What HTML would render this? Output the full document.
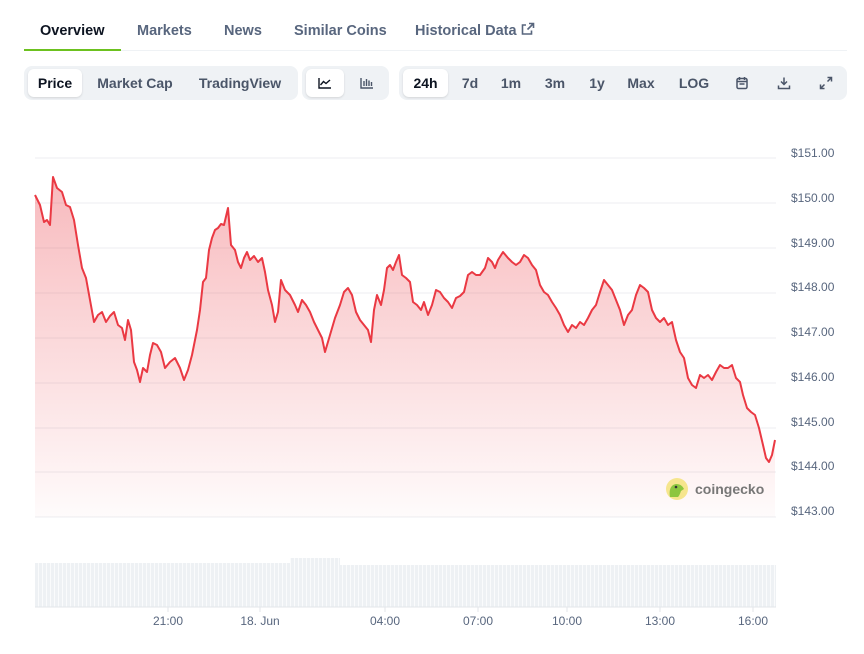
<!DOCTYPE html>
<html><head><meta charset="utf-8"><style>
body{margin:0;background:#fff;width:864px;height:654px;overflow:hidden;font-family:"Liberation Sans",sans-serif;position:relative}
.tabs{position:absolute;left:24px;top:0;width:823px;height:50px;border-bottom:1px solid #eff2f5}
.tab{position:absolute;top:23px;font-size:14.5px;font-weight:bold;color:#58667e}
.ul{position:absolute;left:24px;top:49px;width:97px;height:2px;background:#6cc11f}
.grp{position:absolute;top:66px;height:34px;background:#eff2f5;border-radius:8px}
.b{position:absolute;top:3px;height:28px;line-height:28px;font-size:14px;font-weight:bold;color:#4a5568;text-align:center}
.sel{background:#fff;border-radius:6px;color:#0d1421;box-shadow:0 1px 2px rgba(0,0,0,.12)}
.yl{position:absolute;left:791px;font-size:12px;color:#58667e}
.xl{position:absolute;top:614px;font-size:12px;color:#58667e;transform:translateX(-50%)}
</style></head><body>
<div class="tabs"></div>
<div class="tab" style="left:40px;color:#0d1421">Overview</div>
<div class="tab" style="left:137px">Markets</div>
<div class="tab" style="left:224px">News</div>
<div class="tab" style="left:294px">Similar Coins</div>
<div class="tab" style="left:415px;top:22px">Historical Data <svg width="14" height="14" viewBox="0 0 14 14" style="vertical-align:-1px"><path d="M8 1.5h4.5V6M12.5 1.5L6.5 7.5M10.5 8.5v3.5h-9v-9H5" fill="none" stroke="#58667e" stroke-width="1.6"/></svg></div>
<div class="ul"></div>

<div class="grp" style="left:24px;width:274px">
<div class="b sel" style="left:4px;width:54px">Price</div>
<div class="b" style="left:66px;width:90px">Market Cap</div>
<div class="b" style="left:166px;width:100px">TradingView</div>
</div>
<div class="grp" style="left:302px;width:87px">
<div class="b sel" style="left:4px;width:38px"><svg width="14" height="12" viewBox="0 0 14 12" style="vertical-align:-1px"><path d="M1 1v10h12M2.5 8l3-3.5 2.5 2 4-3.5" fill="none" stroke="#0d1421" stroke-width="1.4"/></svg></div>
<div class="b" style="left:46px;width:38px"><svg width="14" height="12" viewBox="0 0 14 12" style="vertical-align:-1px"><path d="M1 1v10h12M4 9V4M6.5 9V2M9 9V3.5M11.5 9V5" fill="none" stroke="#4a5568" stroke-width="1.4"/></svg></div>
</div>
<div class="grp" style="left:399px;width:448px">
<div class="b sel" style="left:4px;width:45px">24h</div>
<div class="b" style="left:56px;width:30px">7d</div>
<div class="b" style="left:96px;width:32px">1m</div>
<div class="b" style="left:140px;width:32px">3m</div>
<div class="b" style="left:184px;width:28px">1y</div>
<div class="b" style="left:222px;width:40px">Max</div>
<div class="b" style="left:272px;width:46px">LOG</div>
<div class="b" style="left:328px;width:30px"><svg width="14" height="14" viewBox="0 0 14 14" style="vertical-align:-2px"><rect x="2" y="2.5" width="10" height="10" rx="1.5" fill="none" stroke="#4a5568" stroke-width="1.5"/><path d="M2 5.5h10M4.5 1v3M9.5 1v3M4.5 8h5" stroke="#4a5568" stroke-width="1.5"/></svg></div>
<div class="b" style="left:370px;width:30px"><svg width="14" height="14" viewBox="0 0 14 14" style="vertical-align:-2px"><path d="M7 1.5v7M4 5.5l3 3 3-3M1.5 9.5v3h11v-3" fill="none" stroke="#4a5568" stroke-width="1.5"/></svg></div>
<div class="b" style="left:412px;width:30px"><svg width="14" height="14" viewBox="0 0 14 14" style="vertical-align:-2px"><path d="M8.5 1.5h4v4M12.5 1.5L8.5 5.5M5.5 12.5h-4v-4M1.5 12.5l4-4" fill="none" stroke="#4a5568" stroke-width="1.5"/></svg></div>
</div>

<svg width="864" height="654" style="position:absolute;left:0;top:0">
<defs><linearGradient id="g" x1="0" y1="0" x2="0" y2="1"><stop offset="0" stop-color="#ea3943" stop-opacity=".35"/><stop offset="1" stop-color="#ea3943" stop-opacity=".02"/></linearGradient>
<pattern id="vb" x="35" y="0" width="4" height="10" patternUnits="userSpaceOnUse"><rect x="0" y="0" width="3" height="10" fill="#eef1f4"/><rect x="3" y="0" width="1" height="10" fill="#fafbfc"/></pattern></defs>
<g stroke="#eceef1" stroke-width="1">
<path d="M35 158H776M35 203H776M35 248H776M35 293H776M35 338H776M35 383H776M35 428H776M35 472H776M35 517H776"/>
</g>
<path fill="url(#g)" d="M35,517 L35,195 40,205 44,222 47,220 50,225 53,177 57,188 62,192 66,205 70,207 74,220 78,245 82,268 86,278 90,300 94,322 98,315 102,312 106,322 110,316 114,312 118,325 122,328 125,340 128,320 131,330 134,362 137,370 140,382 143,368 147,372 150,355 153,343 157,345 161,352 165,368 170,362 175,358 180,368 184,380 188,370 192,355 197,330 200,310 203,282 206,278 209,250 212,238 215,230 218,228 221,224 224,225 228,208 231,245 235,250 238,262 241,268 244,258 247,252 250,260 254,256 258,262 262,258 265,272 268,290 272,305 275,322 278,312 281,280 285,290 290,295 295,305 298,312 302,300 306,305 310,312 314,322 318,330 322,338 325,352 330,335 335,318 340,305 344,292 348,288 352,295 356,312 360,320 364,325 368,330 371,342 374,310 377,295 381,305 384,290 387,268 390,265 393,270 396,262 399,255 402,275 406,278 410,282 413,302 417,305 421,310 424,302 428,315 432,305 436,290 440,292 444,298 448,302 452,308 456,298 460,296 464,292 468,275 472,272 476,275 480,275 485,268 488,258 492,262 495,268 498,260 503,252 508,258 512,262 516,265 520,262 524,255 528,258 532,265 536,270 540,285 544,292 548,295 552,302 556,308 560,315 564,325 568,332 572,325 576,328 580,322 584,325 588,318 592,310 596,305 600,292 604,280 608,285 612,290 616,300 620,310 624,325 628,315 632,310 636,295 640,285 644,288 648,292 652,310 656,318 660,322 664,318 668,325 672,322 676,340 680,352 684,358 688,378 692,385 696,388 700,375 704,378 708,375 712,380 716,372 720,365 724,368 728,368 732,365 736,378 740,382 743,395 747,408 751,412 755,415 759,428 763,445 766,458 769,462 772,455 775,440 L775,517 Z"/>
<polyline fill="none" stroke="#ea3943" stroke-width="2" stroke-linejoin="round" points="35,195 40,205 44,222 47,220 50,225 53,177 57,188 62,192 66,205 70,207 74,220 78,245 82,268 86,278 90,300 94,322 98,315 102,312 106,322 110,316 114,312 118,325 122,328 125,340 128,320 131,330 134,362 137,370 140,382 143,368 147,372 150,355 153,343 157,345 161,352 165,368 170,362 175,358 180,368 184,380 188,370 192,355 197,330 200,310 203,282 206,278 209,250 212,238 215,230 218,228 221,224 224,225 228,208 231,245 235,250 238,262 241,268 244,258 247,252 250,260 254,256 258,262 262,258 265,272 268,290 272,305 275,322 278,312 281,280 285,290 290,295 295,305 298,312 302,300 306,305 310,312 314,322 318,330 322,338 325,352 330,335 335,318 340,305 344,292 348,288 352,295 356,312 360,320 364,325 368,330 371,342 374,310 377,295 381,305 384,290 387,268 390,265 393,270 396,262 399,255 402,275 406,278 410,282 413,302 417,305 421,310 424,302 428,315 432,305 436,290 440,292 444,298 448,302 452,308 456,298 460,296 464,292 468,275 472,272 476,275 480,275 485,268 488,258 492,262 495,268 498,260 503,252 508,258 512,262 516,265 520,262 524,255 528,258 532,265 536,270 540,285 544,292 548,295 552,302 556,308 560,315 564,325 568,332 572,325 576,328 580,322 584,325 588,318 592,310 596,305 600,292 604,280 608,285 612,290 616,300 620,310 624,325 628,315 632,310 636,295 640,285 644,288 648,292 652,310 656,318 660,322 664,318 668,325 672,322 676,340 680,352 684,358 688,378 692,385 696,388 700,375 704,378 708,375 712,380 716,372 720,365 724,368 728,368 732,365 736,378 740,382 743,395 747,408 751,412 755,415 759,428 763,445 766,458 769,462 772,455 775,440"/>
<path d="M35 563H290V558H340V565H776V607H35Z" fill="url(#vb)"/>
<path d="M35 607H776" stroke="#e3e6ea"/>
<g stroke="#e3e6ea"><path d="M168 607v5M260 607v5M385 607v5M478 607v5M567 607v5M660 607v5M753 607v5"/></g>
<circle cx="677" cy="489" r="11" fill="#f6e58d"/>
<path d="M670 497c-1-6 0-12 6-13 5 0 7 3 8 5l-3 2c-1 3-2 5-3 6z" fill="#8dc63f"/>
<circle cx="676" cy="487" r="1.3" fill="#333"/>
<text x="695" y="494" font-family="Liberation Sans" font-weight="bold" font-size="14" fill="#777">coingecko</text>
</svg>
<div class="yl" style="top:146px">$151.00</div>
<div class="yl" style="top:191px">$150.00</div>
<div class="yl" style="top:236px">$149.00</div>
<div class="yl" style="top:280px">$148.00</div>
<div class="yl" style="top:325px">$147.00</div>
<div class="yl" style="top:370px">$146.00</div>
<div class="yl" style="top:415px">$145.00</div>
<div class="yl" style="top:459px">$144.00</div>
<div class="yl" style="top:504px">$143.00</div>
<div class="xl" style="left:168px">21:00</div>
<div class="xl" style="left:260px">18. Jun</div>
<div class="xl" style="left:385px">04:00</div>
<div class="xl" style="left:478px">07:00</div>
<div class="xl" style="left:567px">10:00</div>
<div class="xl" style="left:660px">13:00</div>
<div class="xl" style="left:753px">16:00</div>
</body></html>
